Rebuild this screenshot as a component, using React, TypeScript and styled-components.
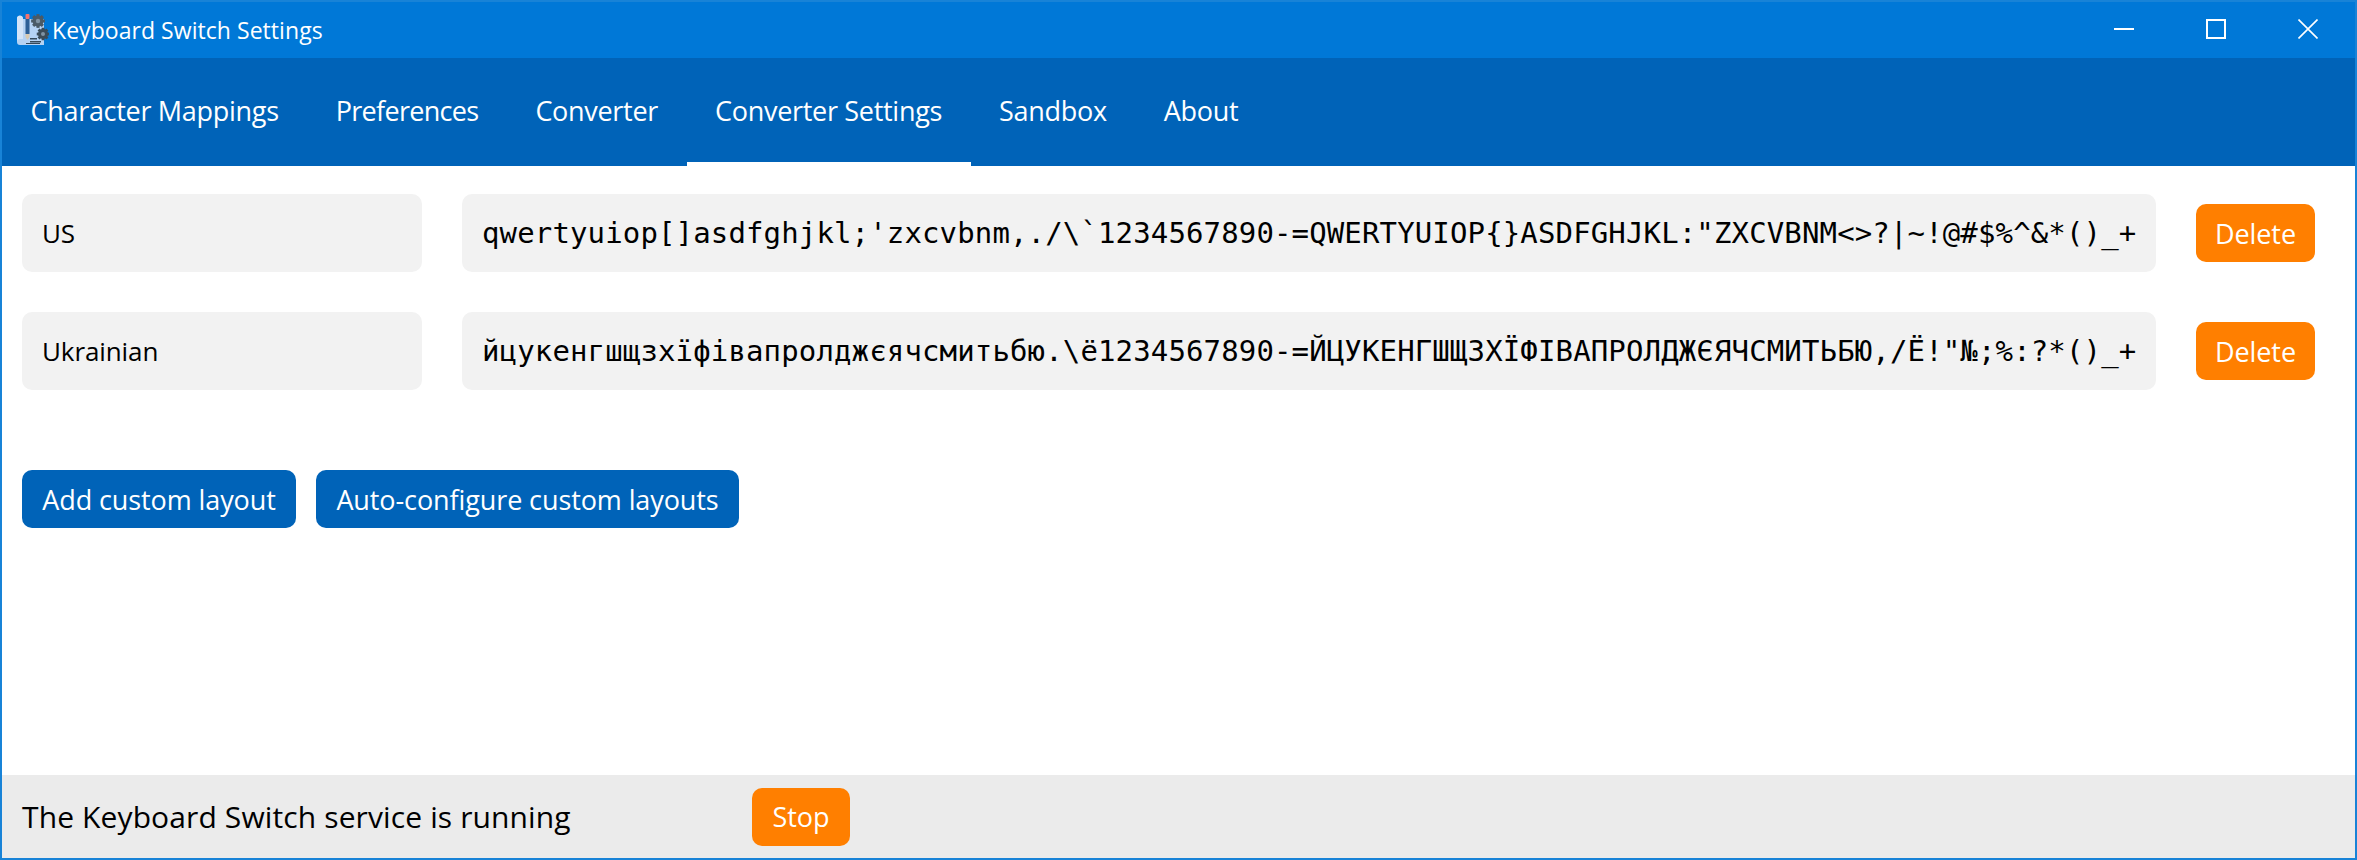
import React from "react";
import styled, { createGlobalStyle } from "styled-components";

const GlobalStyle = createGlobalStyle`
  html, body {
    margin: 0;
    padding: 0;
    background: #fff;
  }
  * {
    box-sizing: border-box;
  }
`;

const Window = styled.div`
  width: 2357px;
  height: 860px;
  display: flex;
  flex-direction: column;
  overflow: hidden;
  border: 2px solid #1883d7;
  font-family: "Open Sans", "Noto Sans", sans-serif;
  color: #000;
  background: #fff;
`;

const TitleBar = styled.div`
  height: 56px;
  flex: none;
  display: flex;
  align-items: center;
  padding-left: 13px;
  background: #0078d7;
  color: #fff;
`;

const AppIcon = styled.svg`
  width: 34px;
  height: 34px;
  flex: none;
`;

const Title = styled.span`
  margin-left: 3px;
  font-size: 23px;
  letter-spacing: 0.05px;
`;

const WindowButtons = styled.div`
  margin-left: auto;
  padding-right: 1px;
  display: flex;
`;

const WindowButton = styled.div`
  width: 92px;
  height: 56px;
  padding-bottom: 2px;
  display: flex;
  align-items: center;
  justify-content: center;
`;

const TabBar = styled.nav`
  height: 108px;
  flex: none;
  display: flex;
  background: #0063b8;
`;

const Tab = styled.div<{ $active?: boolean; $tracking: number }>`
  display: flex;
  align-items: center;
  padding: 0 28.5px;
  font-size: 27px;
  letter-spacing: ${(p) => p.$tracking}px;
  color: #fff;
  border-bottom: 4px solid ${(p) => (p.$active ? "#fff" : "transparent")};
`;

const Content = styled.main`
  flex: 1;
  display: flex;
  flex-direction: column;
  padding: 28px 40px 0 20px;
`;

const Rows = styled.div`
  display: flex;
  flex-direction: column;
  gap: 40px;
`;

const Row = styled.div`
  display: flex;
  align-items: center;
  gap: 40px;
`;

const Field = styled.div`
  height: 78px;
  display: flex;
  align-items: center;
  padding: 0 20px;
  border-radius: 10px;
  background: #f2f2f2;
  white-space: nowrap;
  overflow: hidden;
`;

const NameField = styled(Field)`
  width: 400px;
  flex: none;
  font-size: 26px;
  letter-spacing: -0.1px;
`;

const CharsField = styled(Field)`
  flex: 1;
  font-family: "DejaVu Sans Mono", monospace;
  font-size: 29px;
  letter-spacing: 0.14px;
`;

const Button = styled.button<{ $tone: "blue" | "orange"; $width: number }>`
  height: 58px;
  width: ${(p) => p.$width}px;
  flex: none;
  padding: 0;
  border: 0;
  border-radius: 10px;
  background: ${(p) => (p.$tone === "blue" ? "#0063b8" : "#ff7f00")};
  color: #fff;
  font-family: inherit;
  font-size: 27px;
  letter-spacing: -0.1px;
  white-space: nowrap;
`;

const Actions = styled.div`
  margin-top: 80px;
  display: flex;
  gap: 20px;
`;

const StatusBar = styled.footer`
  height: 83px;
  flex: none;
  display: flex;
  align-items: center;
  padding-left: 20px;
  background: #ebebeb;
`;

const StatusText = styled.span`
  width: 730px;
  font-size: 30px;
  letter-spacing: 0.12px;
`;

const layouts = [
  {
    name: "US",
    chars: "qwertyuiop[]asdfghjkl;'zxcvbnm,./\\`1234567890-=QWERTYUIOP{}ASDFGHJKL:\"ZXCVBNM<>?|~!@#$%^&*()_+",
  },
  {
    name: "Ukrainian",
    chars: "йцукенгшщзхїфівапролджєячсмитьбю.\\ё1234567890-=ЙЦУКЕНГШЩЗХЇФІВАПРОЛДЖЄЯЧСМИТЬБЮ,/Ё!\"№;%:?*()_+",
  },
];

const tabs = [
  { label: "Character Mappings", tracking: -0.3 },
  { label: "Preferences", tracking: -0.7 },
  { label: "Converter", tracking: -0.3 },
  { label: "Converter Settings", tracking: -0.3 },
  { label: "Sandbox", tracking: -0.3 },
  { label: "About", tracking: -0.3 },
];

const Gear = ({ x, y, r, fill }: { x: number; y: number; r: number; fill: string }) => (
  <g fill={fill}>
    {[0, 45, 90, 135].map((a) => (
      <rect
        key={a}
        x={x - r * 0.28}
        y={y - r * 1.25}
        width={r * 0.56}
        height={r * 2.5}
        transform={`rotate(${a} ${x} ${y})`}
      />
    ))}
    <circle cx={x} cy={y} r={r} />
    <circle cx={x} cy={y} r={r * 0.4} fill="#7f93a3" />
  </g>
);

const App = () => {
  return (
    <>
      <GlobalStyle />
      <Window>
        <TitleBar>
          <AppIcon viewBox="0 0 34 34">
            <path d="M8 6h21v26H5a3 3 0 0 1-3-3V6a3 3 0 0 1 6 0z" fill="#b5d2f3" />
            <path d="M2 29a3 3 0 0 1 3-3h3V5a3 3 0 0 0-6 1z" fill="#d3e4f8" />
            <rect x="10.5" y="1" width="4" height="5" rx="1" fill="#f4736e" />
            <rect x="10.5" y="6" width="4" height="15" fill="#2d5f96" />
            <path d="M10.5 21h4v3l-2 3-2-3z" fill="#d9c9b0" />
            <path d="M15 25h7v1.5h-7zM15 28h11v1.5H15zM11 30h14v1H11z" fill="#35495a" />
            <Gear x={23} y={8} r={5.5} fill="#4a5a66" />
            <Gear x={28} y={21} r={5} fill="#3c4c58" />
          </AppIcon>
          <Title>Keyboard Switch Settings</Title>
          <WindowButtons>
            <WindowButton>
              <svg width="20" height="20" viewBox="0 0 20 20">
                <rect x="0" y="9" width="20" height="2" fill="#fff" />
              </svg>
            </WindowButton>
            <WindowButton>
              <svg width="20" height="20" viewBox="0 0 20 20">
                <rect x="1" y="1" width="18" height="18" fill="none" stroke="#fff" strokeWidth="2" />
              </svg>
            </WindowButton>
            <WindowButton>
              <svg width="20" height="20" viewBox="0 0 20 20">
                <path d="M0.5 0.5L19.5 19.5M19.5 0.5L0.5 19.5" stroke="#fff" strokeWidth="1.6" />
              </svg>
            </WindowButton>
          </WindowButtons>
        </TitleBar>
        <TabBar>
          {tabs.map((t) => (
            <Tab key={t.label} $tracking={t.tracking} $active={t.label === "Converter Settings"}>
              {t.label}
            </Tab>
          ))}
        </TabBar>
        <Content>
          <Rows>
            {layouts.map((l) => (
              <Row key={l.name}>
                <NameField>{l.name}</NameField>
                <CharsField>{l.chars}</CharsField>
                <Button $tone="orange" $width={119}>
                  Delete
                </Button>
              </Row>
            ))}
          </Rows>
          <Actions>
            <Button $tone="blue" $width={274}>
              Add custom layout
            </Button>
            <Button $tone="blue" $width={423}>
              Auto-configure custom layouts
            </Button>
          </Actions>
        </Content>
        <StatusBar>
          <StatusText>The Keyboard Switch service is running</StatusText>
          <Button $tone="orange" $width={98}>
            Stop
          </Button>
        </StatusBar>
      </Window>
    </>
  );
};

export default App;
